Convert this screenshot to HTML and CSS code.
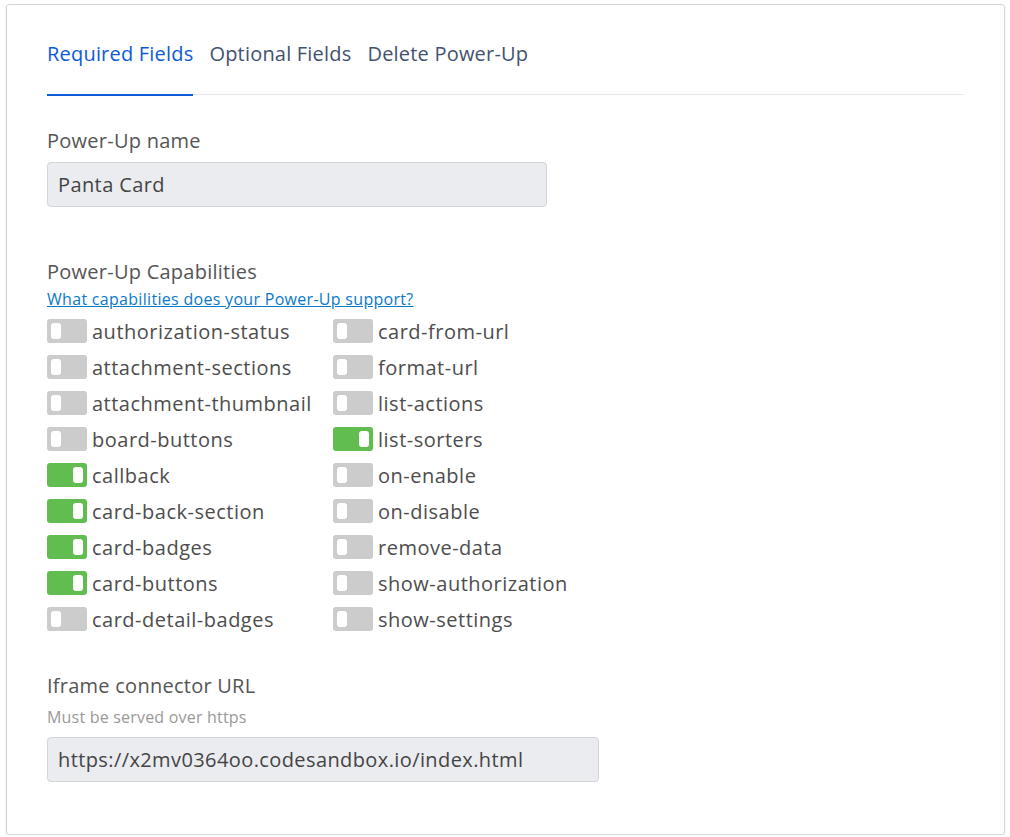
FILE: index.html
```html
<!DOCTYPE html>
<html lang="en">
<head>
<meta charset="utf-8">
<title>Power-Up settings</title>
<link rel="stylesheet" href="styles.css">
</head>
<body>
<div class="card">
  <nav class="tabs">
    <span class="tab active">Required Fields</span>
    <span class="tab">Optional Fields</span>
    <span class="tab">Delete Power-Up</span>
  </nav>

  <label class="label first">Power-Up name</label>
  <div class="input name-input">Panta Card</div>

  <div class="label caps-label">Power-Up Capabilities</div>
  <a class="help-link" href="#">What capabilities does your Power-Up support?</a>

  <div class="caps">
    <div class="cap"><span class="toggle"></span>authorization-status</div>
    <div class="cap"><span class="toggle"></span>card-from-url</div>
    <div class="cap"><span class="toggle"></span>attachment-sections</div>
    <div class="cap"><span class="toggle"></span>format-url</div>
    <div class="cap"><span class="toggle"></span>attachment-thumbnail</div>
    <div class="cap"><span class="toggle"></span>list-actions</div>
    <div class="cap"><span class="toggle"></span>board-buttons</div>
    <div class="cap"><span class="toggle on"></span>list-sorters</div>
    <div class="cap"><span class="toggle on"></span>callback</div>
    <div class="cap"><span class="toggle"></span>on-enable</div>
    <div class="cap"><span class="toggle on"></span>card-back-section</div>
    <div class="cap"><span class="toggle"></span>on-disable</div>
    <div class="cap"><span class="toggle on"></span>card-badges</div>
    <div class="cap"><span class="toggle"></span>remove-data</div>
    <div class="cap"><span class="toggle on"></span>card-buttons</div>
    <div class="cap"><span class="toggle"></span>show-authorization</div>
    <div class="cap"><span class="toggle"></span>card-detail-badges</div>
    <div class="cap"><span class="toggle"></span>show-settings</div>
  </div>

  <div class="label iframe-label">Iframe connector URL</div>
  <div class="hint">Must be served over https</div>
  <div class="input url-input">https://x2mv0364oo.codesandbox.io/index.html</div>
</div>
</body>
</html>
```
FILE: styles.css
```css
html, body {
  margin: 0;
  padding: 0;
  background: #ffffff;
}

body {
  font-family: "Open Sans", "Noto Sans", sans-serif;
  color: #4d4d4d;
  padding: 4px 4px 0 6px;
}

.card {
  width: 999px;
  height: 831px;
  box-sizing: border-box;
  border: 1px solid #d6d6d6;
  border-radius: 3px;
  box-shadow: 0 1px 2px rgba(0, 0, 0, 0.12);
  padding: 35px 40px 0 40px;
}

.tabs {
  display: flex;
  gap: 16px;
  border-bottom: 1px solid #e6e8ec;
  height: 55px;
  box-sizing: border-box;
}

.tab {
  font-size: 20px;
  line-height: 28px;
  letter-spacing: 0.2px;
  color: #42526e;
  height: 55px;
  box-sizing: border-box;
}

.tab.active {
  color: #0c5ad6;
  border-bottom: 2px solid #0c5ad6;
  height: 56px;
}

.label {
  display: block;
  font-size: 20px;
  line-height: 28px;
  letter-spacing: 0.25px;
  color: #555555;
}

.label.first {
  margin-top: 32px;
}

.input {
  box-sizing: border-box;
  height: 45px;
  background: #ebecf0;
  border: 1px solid #d2d4d9;
  border-radius: 4px;
  font-size: 20px;
  line-height: 28px;
  letter-spacing: 0.4px;
  color: #444444;
  padding: 8px 10px;
  margin-top: 7px;
}

.name-input {
  width: 500px;
}

.caps-label {
  margin-top: 51px;
}

.help-link {
  display: block;
  font-size: 16px;
  line-height: 22px;
  letter-spacing: 0.3px;
  color: #0a79c9;
  text-decoration: underline;
  margin-top: 2px;
}

.caps {
  display: grid;
  grid-template-columns: 286px auto;
  grid-auto-rows: 36px;
  margin-top: 3px;
}

.cap {
  display: flex;
  align-items: center;
  gap: 5px;
  font-size: 20px;
  letter-spacing: 0.5px;
  color: #4d4d4d;
}

.toggle {
  position: relative;
  display: block;
  width: 40px;
  height: 24px;
  border-radius: 3px;
  background: #cccccc;
  flex: none;
}

.toggle::after {
  content: "";
  position: absolute;
  top: 4px;
  left: 4px;
  width: 10px;
  height: 16px;
  border-radius: 3px;
  background: #ffffff;
}

.toggle.on {
  background: #61bd4f;
}

.toggle.on::after {
  left: auto;
  right: 4px;
}

.iframe-label {
  margin-top: 35px;
}

.hint {
  font-size: 16px;
  line-height: 22px;
  letter-spacing: 0.2px;
  color: #999999;
  margin-top: 6px;
}

.url-input {
  width: 552px;
  margin-top: 9px;
}
```
